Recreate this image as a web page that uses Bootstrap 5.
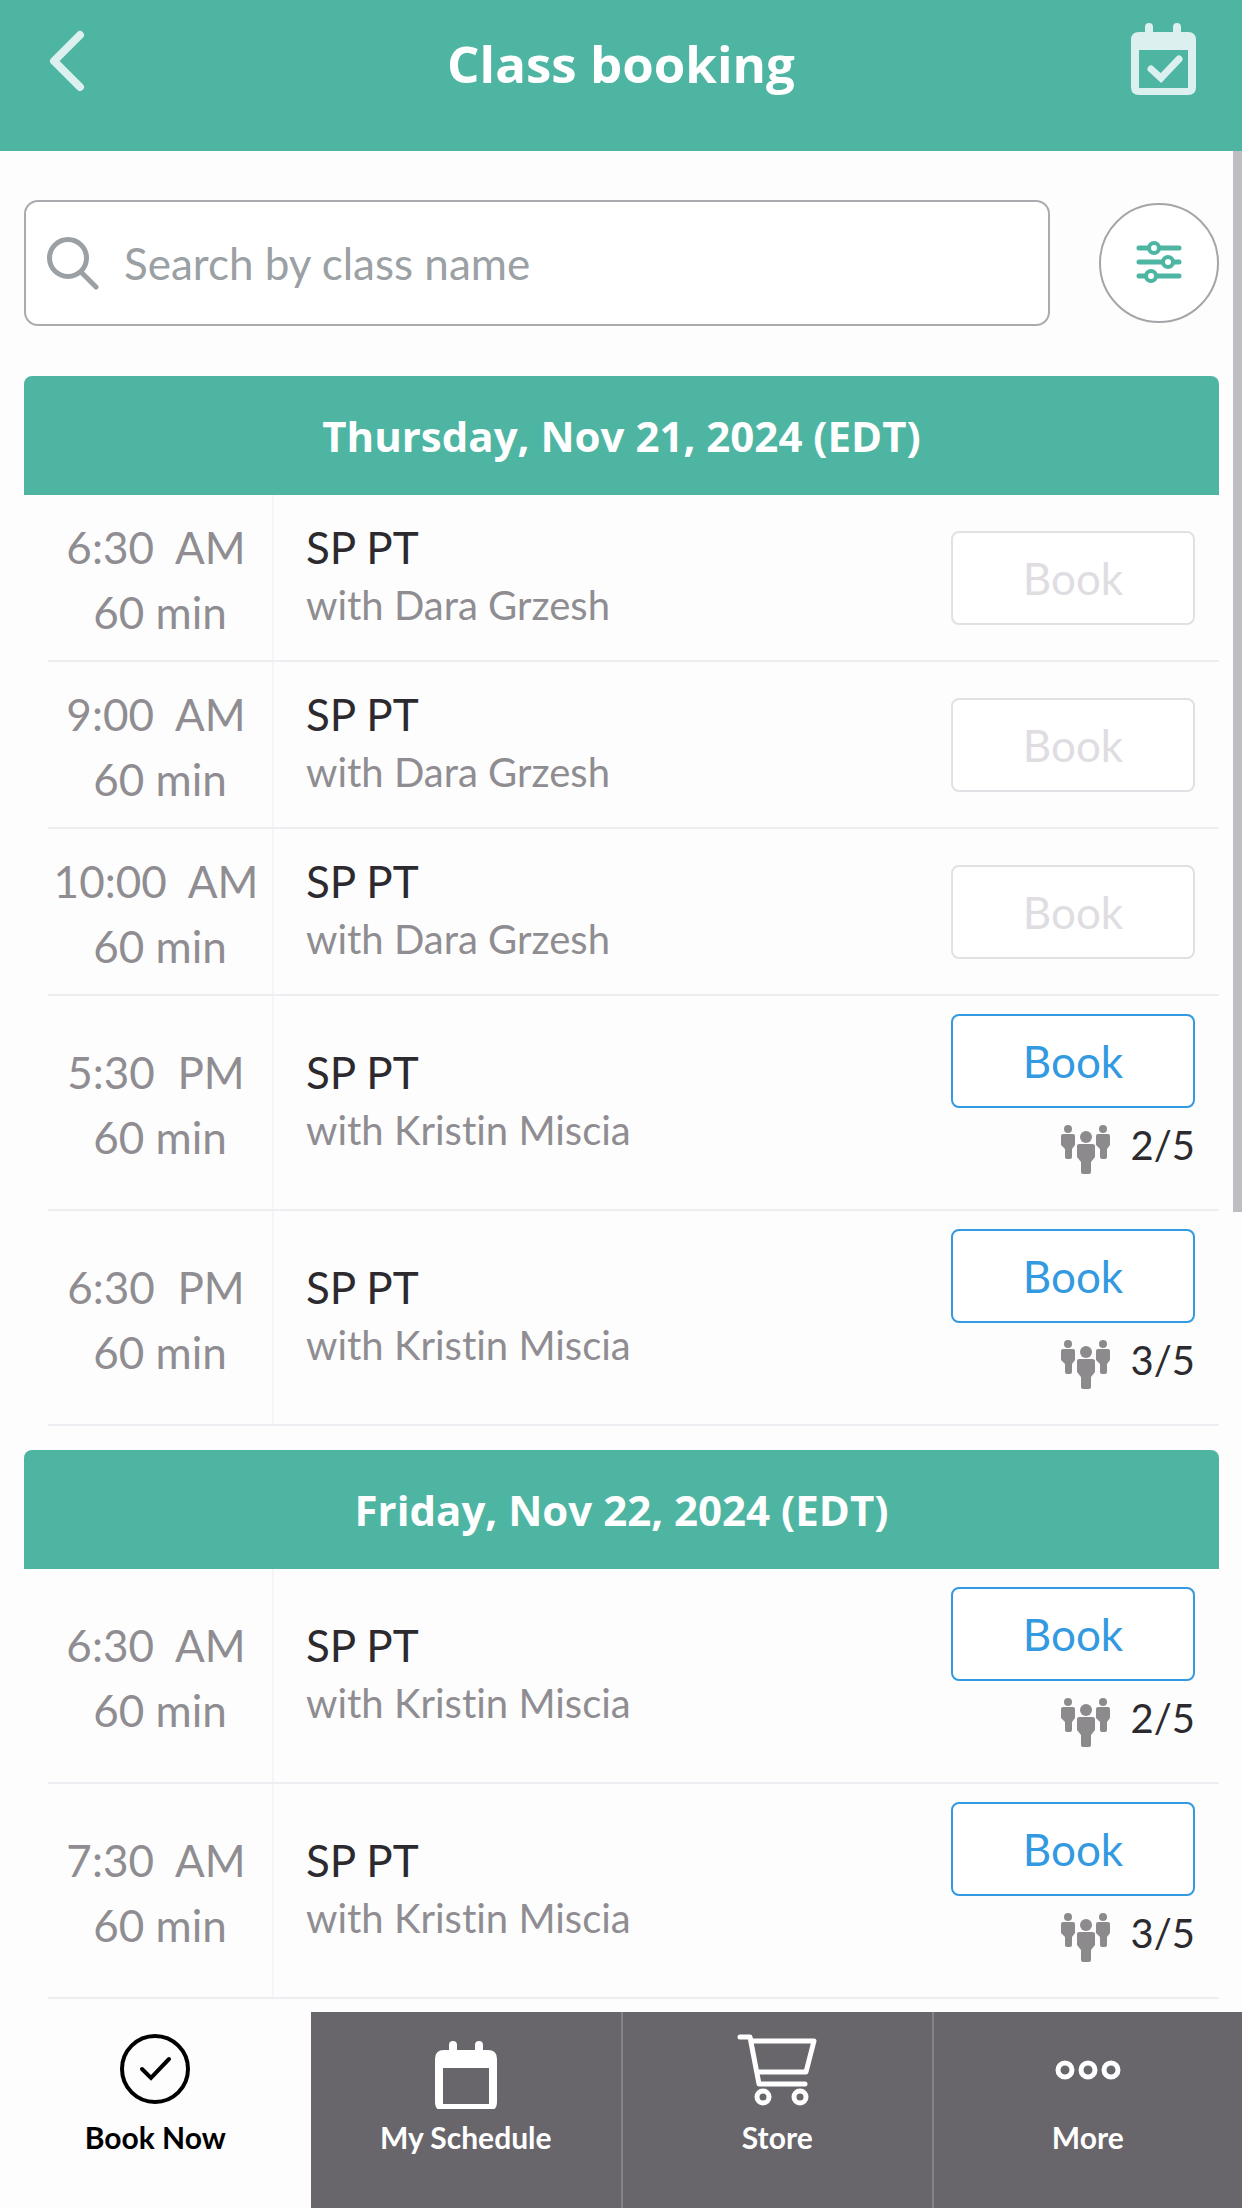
<!DOCTYPE html>
<html lang="en">
<head>
<meta charset="utf-8">
<meta name="viewport" content="width=device-width, initial-scale=1">
<title>Class booking</title>
<link href="https://cdn.jsdelivr.net/npm/bootstrap@5.3.0/dist/css/bootstrap.min.css" rel="stylesheet">
<style>
  :root { --brand: #4eb5a2; --muted: #8f8d91; --line: #efedf2; --sky: #3399e0; }
  body { font-family: Lato, "Open Sans", sans-serif; font-variant-ligatures: none; background: #fdfdfd; color: #2c2a2e; }
  svg { display: block; flex: none; }
  .topbar { background: var(--brand); height: 152px; padding: 18px 42px 0; }
  .topbar h1 { font: 700 51px/90px "Open Sans", sans-serif; margin: 0; }
  .icon-link-top { width: 70px; color: #dcf0ef; }
  .scroller { padding: 49px 23px 0 24px; }
  .scroll-thumb { position: absolute; top: 0; right: 0; width: 9px; height: 57%; background: #bfbdc1; }
  .search-row { gap: 49px; margin-bottom: 50px; }
  .search-box { height: 126px; border: 2px solid #aaabae; border-radius: 14px; padding: 0 22px 0 20px; gap: 24px; background: #fff; }
  .search-box input { font-size: 44px; line-height: 56px; color: #9aa0a3; }
  .search-box input::placeholder { color: #9aa0a3; opacity: 1; }
  .filter-btn { width: 120px; height: 120px; border: 2px solid #a3a6a9; color: var(--brand); background: #fff; }
  .day { margin-bottom: 24px; }
  .day h2 { background: var(--brand); font: 700 42px/119px "Open Sans", sans-serif; border-radius: 8px 8px 0 0; margin: 0; }
  .slot { margin-left: 24px; min-height: 167px; border-bottom: 2px solid var(--line); }
  .slot.open { min-height: 215px; }
  .when { width: 226px; border-right: 2px solid #f6f4fa; color: var(--muted); font-size: 44px; line-height: 65px; padding-top: 4px; }
  .when time { white-space: pre; padding-right: 8px; }
  .what { padding: 4px 0 0 32px; line-height: 65px; font-size: 44px; }
  .what small { font-size: 40px; line-height: 50px; color: var(--muted); margin-bottom: 15px; }
  .act { width: 268px; padding-right: 24px; }
  .slot.open .act { padding-top: 18px; }
  .btn-book { height: 94px; border: 2px solid var(--sky); border-radius: 8px; color: var(--sky); background: #fff; font-size: 44px; line-height: 60px; }
  .btn-book:disabled { color: #e0dde2; border-color: #e3e0e5; opacity: 1; background: #fff; }
  .spots { margin-top: 12px; font-size: 40px; line-height: 50px; gap: 20px; }
  .spots svg { color: #8c8a8d; margin-top: 4px; }
  .tabs { height: 196px; background: #68656b; }
  .tabs a { color: #fff; font-size: 30px; line-height: 40px; font-weight: 700; padding-top: 17px; gap: 8px; border-left: 2px solid #858288; }
  .tabs a.active { background: #fdfdfd; color: #000; border-left: 0; }
  .tabs a.active + a { border-left: 0; }
</style>
</head>
<body>
<svg class="d-none" aria-hidden="true">
  <symbol id="people" viewBox="0 0 50 50">
    <g fill="currentColor">
      <circle cx="7" cy="5" r="4"/><path d="M2 10h10q2 0 2 2v9l-3 4v8q0 2-2 2H6q-2 0-2-2v-8l-4-4v-9q0-2 2-2z"/>
      <circle cx="42" cy="5" r="4"/><path d="M37 10h10q2 0 2 2v9l-3 4v8q0 2-2 2h-3q-2 0-2-2v-8l-4-4v-9q0-2 2-2z"/>
      <circle cx="25" cy="13" r="6"/><path d="M18 20h13q3 0 3 2v11l-4 5v10q0 2-2 2h-6q-2 0-2-2V38l-4-5V22q0-2 2-2z"/>
    </g>
  </symbol>
</svg>
<div class="vh-100 d-flex flex-column overflow-hidden">
  <header class="topbar d-flex justify-content-between align-items-start text-white">
    <a class="icon-link-top" href="#" aria-label="Back">
      <svg width="46" height="84" viewBox="0 0 46 84" fill="none" stroke="currentColor" stroke-width="8" stroke-linecap="round" stroke-linejoin="round"><path d="M38 17 12 43l26 26"/></svg>
    </a>
    <h1>Class booking</h1>
    <a class="icon-link-top" href="#" aria-label="My bookings">
      <svg width="70" height="84" viewBox="0 0 70 84">
        <path fill="currentColor" fill-rule="evenodd" d="M13 14V9q0-4 4-4t4 4v5h20V9q0-4 4-4t4 4v5h7q8 0 8 8v47q0 8-8 8H7q-8 0-8-8V22q0-8 8-8zM7 32v38h49V32z" transform="translate(2)"/>
        <path d="m21 51 10 9 18-19" fill="none" stroke="currentColor" stroke-width="7" stroke-linecap="round"/>
      </svg>
    </a>
  </header>

  <main class="scroller flex-grow-1 overflow-hidden position-relative">
    <div class="scroll-thumb"></div>
    <form class="search-row d-flex align-items-center">
      <label class="search-box d-flex align-items-center flex-grow-1">
        <svg width="54" height="54" viewBox="0 0 54 54" fill="none" stroke="#9aa0a3" stroke-width="5" stroke-linecap="round"><circle cx="22" cy="22" r="18.500"/><path d="m35 36 15 15"/></svg>
        <input class="border-0 bg-transparent p-0 w-100" type="search" placeholder="Search by class name" aria-label="Search by class name">
      </label>
      <button class="filter-btn rounded-circle p-0 d-flex align-items-center justify-content-center flex-shrink-0" type="button" aria-label="Filters">
        <svg width="46" height="46" viewBox="0 0 46 46" fill="none" stroke="currentColor" stroke-width="5" stroke-linecap="round"><path d="M3 8h9m12 0h19M3 22h23m12 0h5M3 36h6m12 0h22"/><g stroke-width="4"><circle cx="18" cy="8" r="5"/><circle cx="32" cy="22" r="5"/><circle cx="15" cy="36" r="5"/></g></svg>
      </button>
    </form>

    <section class="day">
      <h2 class="text-white text-center">Thursday, Nov 21, 2024 (EDT)</h2>
      <ul class="list-unstyled m-0">
        <li class="slot d-flex"><div class="when d-flex flex-column justify-content-center align-items-center"><time>6:30  AM</time><span>60 min</span></div><div class="what d-flex flex-column justify-content-center flex-grow-1"><span>SP PT</span><small>with Dara Grzesh</small></div><div class="act d-flex flex-column justify-content-center"><button class="btn btn-book" type="button" disabled>Book</button></div></li>
        <li class="slot d-flex"><div class="when d-flex flex-column justify-content-center align-items-center"><time>9:00  AM</time><span>60 min</span></div><div class="what d-flex flex-column justify-content-center flex-grow-1"><span>SP PT</span><small>with Dara Grzesh</small></div><div class="act d-flex flex-column justify-content-center"><button class="btn btn-book" type="button" disabled>Book</button></div></li>
        <li class="slot d-flex"><div class="when d-flex flex-column justify-content-center align-items-center"><time>10:00  AM</time><span>60 min</span></div><div class="what d-flex flex-column justify-content-center flex-grow-1"><span>SP PT</span><small>with Dara Grzesh</small></div><div class="act d-flex flex-column justify-content-center"><button class="btn btn-book" type="button" disabled>Book</button></div></li>
        <li class="slot open d-flex"><div class="when d-flex flex-column justify-content-center align-items-center"><time>5:30  PM</time><span>60 min</span></div><div class="what d-flex flex-column justify-content-center flex-grow-1"><span>SP PT</span><small>with Kristin Miscia</small></div><div class="act d-flex flex-column"><button class="btn btn-book" type="button">Book</button><div class="spots d-flex justify-content-end"><svg width="50" height="50"><use href="#people"/></svg>2/5</div></div></li>
        <li class="slot open d-flex"><div class="when d-flex flex-column justify-content-center align-items-center"><time>6:30  PM</time><span>60 min</span></div><div class="what d-flex flex-column justify-content-center flex-grow-1"><span>SP PT</span><small>with Kristin Miscia</small></div><div class="act d-flex flex-column"><button class="btn btn-book" type="button">Book</button><div class="spots d-flex justify-content-end"><svg width="50" height="50"><use href="#people"/></svg>3/5</div></div></li>
      </ul>
    </section>

    <section class="day">
      <h2 class="text-white text-center">Friday, Nov 22, 2024 (EDT)</h2>
      <ul class="list-unstyled m-0">
        <li class="slot open d-flex"><div class="when d-flex flex-column justify-content-center align-items-center"><time>6:30  AM</time><span>60 min</span></div><div class="what d-flex flex-column justify-content-center flex-grow-1"><span>SP PT</span><small>with Kristin Miscia</small></div><div class="act d-flex flex-column"><button class="btn btn-book" type="button">Book</button><div class="spots d-flex justify-content-end"><svg width="50" height="50"><use href="#people"/></svg>2/5</div></div></li>
        <li class="slot open d-flex"><div class="when d-flex flex-column justify-content-center align-items-center"><time>7:30  AM</time><span>60 min</span></div><div class="what d-flex flex-column justify-content-center flex-grow-1"><span>SP PT</span><small>with Kristin Miscia</small></div><div class="act d-flex flex-column"><button class="btn btn-book" type="button">Book</button><div class="spots d-flex justify-content-end"><svg width="50" height="50"><use href="#people"/></svg>3/5</div></div></li>
      </ul>
    </section>
  </main>

  <nav class="tabs row g-0 flex-shrink-0">
    <a class="col-3 active d-flex flex-column align-items-center text-decoration-none" href="#" aria-current="page">
      <svg width="80" height="80" viewBox="0 0 80 80" fill="none" stroke="currentColor" stroke-width="4" stroke-linecap="round"><circle cx="40" cy="40" r="33"/><path d="m27 40 9 9 18-19"/></svg>
      Book Now
    </a>
    <a class="col-3 d-flex flex-column align-items-center text-decoration-none" href="#">
      <svg width="80" height="80" viewBox="0 0 80 80"><path fill="currentColor" fill-rule="evenodd" d="M23 21v-5q0-4 4-4t4 4v5h18v-5q0-4 4-4t4 4v5h5q9 0 9 9v43q0 9-9 9H18q-9 0-9-9V30q0-9 9-9zM17 39v36h46V39z"/></svg>
      My Schedule
    </a>
    <a class="col-3 d-flex flex-column align-items-center text-decoration-none" href="#">
      <svg width="80" height="80" viewBox="0 0 80 80" fill="none" stroke="currentColor" stroke-width="5" stroke-linecap="round" stroke-linejoin="round"><path d="M3 8h10l9 47h46M16 12h61l-8 31H21"/><circle cx="26" cy="68" r="6"/><circle cx="63" cy="68" r="6"/></svg>
      Store
    </a>
    <a class="col-3 d-flex flex-column align-items-center text-decoration-none" href="#">
      <svg width="80" height="80" viewBox="0 0 80 80" fill="none" stroke="currentColor" stroke-width="5"><circle cx="17" cy="41" r="7"/><circle cx="40" cy="41" r="7"/><circle cx="63" cy="41" r="7"/></svg>
      More
    </a>
  </nav>
</div>
<script src="https://cdn.jsdelivr.net/npm/bootstrap@5.3.0/dist/js/bootstrap.bundle.min.js"></script>
</body>
</html>
